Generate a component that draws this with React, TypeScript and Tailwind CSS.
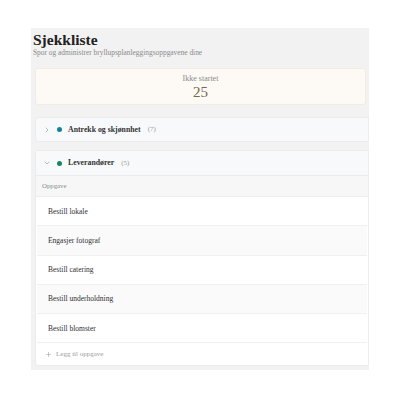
import { ChevronRight, ChevronDown, Plus } from 'lucide-react'

const TASKS = ['Bestill lokale', 'Engasjer fotograf', 'Bestill catering', 'Bestill underholdning', 'Bestill blomster']

const serif = { fontFamily: '"Liberation Serif", "DejaVu Serif", serif' }

export default function App() {
  return (
    <div className="w-[400px] h-[400px] bg-white pt-[28px] pl-[31px]" style={serif}>
      <div className="w-[338px] h-[342px] bg-[#f2f2f2] overflow-hidden pl-[4px] pt-[4px]">
        {/* Header */}
        <div className="-ml-[2px]">
          <h1 className="text-[15.5px] font-bold text-[#222] leading-[16px]">Sjekkliste</h1>
          <p className="text-[7.4px] text-[#8a8a8a] leading-[10px]">Spor og administrer bryllupsplanleggingsoppgavene dine</p>
        </div>

        {/* Stats */}
        <div className="mt-[10px] mr-[3px] h-[37px] bg-[#fdf9f4] rounded-[3px] border border-[#f3ece3] flex flex-col items-center justify-center">
          <span className="text-[8px] text-[#8a8a8a] leading-[9px]">Ikke startet</span>
          <span className="text-[15px] text-[#76664f] leading-[16px] mt-[1px]">25</span>
        </div>

        {/* Group 1 collapsed */}
        <div className="mt-[12px] h-[25px] bg-[#f8f9fa] rounded-l-[3px] border border-[#ececec] flex items-center pl-[7px]">
          <ChevronRight className="w-[8px] h-[8px] text-[#999]" strokeWidth={2} />
          <span className="ml-[6px] w-[5px] h-[5px] rounded-full bg-[#11809a]" />
          <span className="ml-[6px] text-[7.8px] font-bold text-[#333]">Antrekk og skjønnhet</span>
          <span className="ml-[7px] text-[7px] text-[#999]">(7)</span>
        </div>

        {/* Group 2 expanded */}
        <div className="mt-[8px] bg-white rounded-l-[3px] border border-[#ececec]">
          <div className="h-[25px] bg-[#f8f9fa] border-b border-[#ececec] flex items-center pl-[7px]">
            <ChevronDown className="w-[8px] h-[8px] text-[#999]" strokeWidth={2} />
            <span className="ml-[6px] w-[5px] h-[5px] rounded-full bg-[#16895c]" />
            <span className="ml-[6px] text-[7.8px] font-bold text-[#333]">Leverandører</span>
            <span className="ml-[7px] text-[7px] text-[#999]">(5)</span>
          </div>
          <div className="h-[21px] bg-[#f7f7f7] flex items-center pl-[6px] border-b border-[#eeeeee]">
            <span className="text-[6.8px] text-[#888]">Oppgave</span>
          </div>
          <div className="px-[1px]">
            {TASKS.map((t, i) => (
              <div
                key={t}
                className={
                  i % 2 === 1
                    ? 'h-[29.3px] flex items-center pl-[11px] bg-[#fafafa] border-b border-[#f0f0f0]'
                    : 'h-[29.3px] flex items-center pl-[11px] bg-white border-b border-[#f0f0f0]'
                }
              >
                <span className="text-[7.5px] text-[#2f2f2f]">{t}</span>
              </div>
            ))}
          </div>
          <div className="h-[22px] flex items-center pl-[9px]">
            <Plus className="w-[7px] h-[7px] text-[#888]" strokeWidth={1.5} />
            <span className="ml-[4px] text-[7px] text-[#999]">Legg til oppgave</span>
          </div>
        </div>
      </div>
    </div>
  )
}
